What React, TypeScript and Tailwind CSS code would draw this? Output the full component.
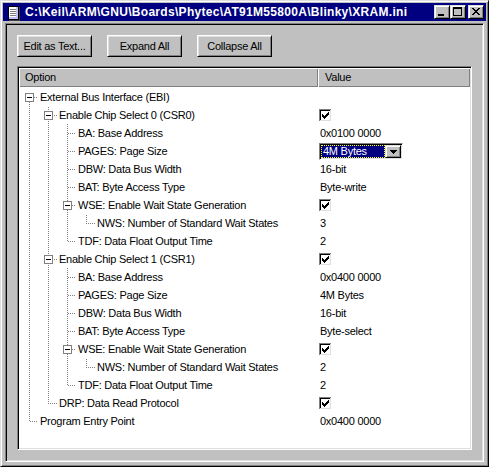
import React from "react";

type Row = {
  level: number;
  text: string;
  expander?: boolean;
  value?: string;
  check?: boolean;
  dropdown?: string;
};

const rows: Row[] = [
  { level: 0, text: "External Bus Interface (EBI)", expander: true },
  { level: 1, text: "Enable Chip Select 0 (CSR0)", expander: true, check: true },
  { level: 2, text: "BA: Base Address", value: "0x0100 0000" },
  { level: 2, text: "PAGES: Page Size", dropdown: "4M Bytes" },
  { level: 2, text: "DBW: Data Bus Width", value: "16-bit" },
  { level: 2, text: "BAT: Byte Access Type", value: "Byte-write" },
  { level: 2, text: "WSE: Enable Wait State Generation", expander: true, check: true },
  { level: 3, text: "NWS: Number of Standard Wait States", value: "3" },
  { level: 2, text: "TDF: Data Float Output Time", value: "2" },
  { level: 1, text: "Enable Chip Select 1 (CSR1)", expander: true, check: true },
  { level: 2, text: "BA: Base Address", value: "0x0400 0000" },
  { level: 2, text: "PAGES: Page Size", value: "4M Bytes" },
  { level: 2, text: "DBW: Data Bus Width", value: "16-bit" },
  { level: 2, text: "BAT: Byte Access Type", value: "Byte-select" },
  { level: 2, text: "WSE: Enable Wait State Generation", expander: true, check: true },
  { level: 3, text: "NWS: Number of Standard Wait States", value: "2" },
  { level: 2, text: "TDF: Data Float Output Time", value: "2" },
  { level: 1, text: "DRP: Data Read Protocol", check: true },
  { level: 0, text: "Program Entry Point", value: "0x0400 0000" },
];

const indentCls = ["pl-[21px]", "pl-[40px]", "pl-[59px]", "pl-[78px]"];

function hasNext(i: number): boolean {
  const L = rows[i].level;
  for (let j = i + 1; j < rows.length; j++) {
    if (rows[j].level < L) return false;
    if (rows[j].level === L) return true;
  }
  return false;
}
function hasPrev(i: number): boolean {
  const L = rows[i].level;
  for (let j = i - 1; j >= 0; j--) {
    if (rows[j].level < L) return false;
    if (rows[j].level === L) return true;
  }
  return false;
}
function ancestorCont(i: number, d: number): boolean {
  for (let j = i - 1; j >= 0; j--) {
    if (rows[j].level === d) return hasNext(j);
  }
  return false;
}

const cx = (L: number) => 10 + 19 * L;

function vDots(x: number, y0: number, y1: number, key: string) {
  const out: React.ReactElement[] = [];
  for (let y = y0; y < y1; y++) {
    if ((x + y) % 2 === 0) out.push(<rect key={key + "v" + y} x={x} y={y} width={1} height={1} fill="#808080" />);
  }
  return out;
}
function hDots(x0: number, x1: number, y: number, key: string) {
  const out: React.ReactElement[] = [];
  for (let x = x0; x < x1; x++) {
    if ((x + y) % 2 === 0) out.push(<rect key={key + "h" + x} x={x} y={y} width={1} height={1} fill="#808080" />);
  }
  return out;
}

function TreeLines({ i }: { i: number }) {
  const r = rows[i];
  const L = r.level;
  const els: React.ReactElement[] = [];
  for (let d = 0; d < L; d++) {
    if (ancestorCont(i, d)) els.push(...vDots(cx(d), 0, 18, "a" + d));
  }
  const c = cx(L);
  const top = L > 0 || hasPrev(i);
  const bottom = hasNext(i);
  if (top) els.push(...vDots(c, 0, 10, "t"));
  if (bottom) els.push(...vDots(c, 9, 18, "b"));
  els.push(...hDots(r.expander ? c + 5 : c, c + 9, 9, "h"));
  return (
    <svg className="absolute left-0 top-0" width={299} height={18} shapeRendering="crispEdges">
      {els}
      {r.expander && (
        <g>
          <rect x={c - 4 + 0.5} y={5.5} width={8} height={8} fill="#fff" stroke="#808080" strokeWidth={1} />
          <rect x={c - 2} y={9} width={5} height={1} fill="#000" />
        </g>
      )}
    </svg>
  );
}

function CheckBox() {
  const pix: [number, number][] = [];
  const cols: [number, number][] = [
    [3, 5], [4, 6], [5, 7], [6, 6], [7, 5], [8, 4], [9, 3],
  ];
  cols.forEach(([x, y]) => {
    for (let k = 0; k < 3; k++) pix.push([x, y + k]);
  });
  return (
    <svg width={13} height={13} shapeRendering="crispEdges" className="block">
      <rect x={0} y={0} width={13} height={13} fill="#fff" />
      <rect x={0} y={0} width={12} height={1} fill="#808080" />
      <rect x={0} y={0} width={1} height={12} fill="#808080" />
      <rect x={1} y={1} width={10} height={1} fill="#000" />
      <rect x={1} y={1} width={1} height={10} fill="#000" />
      <rect x={0} y={12} width={13} height={1} fill="#fff" />
      <rect x={12} y={0} width={1} height={13} fill="#fff" />
      <rect x={1} y={11} width={11} height={1} fill="#dfdfdf" />
      <rect x={11} y={1} width={1} height={11} fill="#dfdfdf" />
      {pix.map(([x, y]) => (
        <rect key={x + "-" + y} x={x} y={y} width={1} height={1} fill="#000" />
      ))}
    </svg>
  );
}

function Dropdown({ text }: { text: string }) {
  return (
    <div className="ml-[1px] mt-[1px] h-[17px] w-[84px] flex border border-t-[#808080] border-l-[#808080] border-b-white border-r-white shadow-[inset_1px_1px_0_#000,inset_-1px_-1px_0_#dfdfdf] p-[1px] bg-white">
      <div className="flex-1 bg-[#000080] border border-dotted border-[#ffff00] text-white flex items-center pl-[1px] leading-[11px]">
        {text}
      </div>
      <div className="w-[16px] h-full bg-[#c0c0c0] border border-t-[#dfdfdf] border-l-[#dfdfdf] border-b-black border-r-black shadow-[inset_1px_1px_0_#fff,inset_-1px_-1px_0_#808080] flex items-center justify-center">
        <svg width={7} height={4} shapeRendering="crispEdges">
          <rect x={0} y={0} width={7} height={1} fill="#000" />
          <rect x={1} y={1} width={5} height={1} fill="#000" />
          <rect x={2} y={2} width={3} height={1} fill="#000" />
          <rect x={3} y={3} width={1} height={1} fill="#000" />
        </svg>
      </div>
    </div>
  );
}

function PushButton({ label }: { label: string }) {
  return (
    <div className="w-[75px] h-[22px] bg-[#c0c0c0] border border-t-white border-l-white border-b-black border-r-black shadow-[inset_1px_1px_0_#dfdfdf,inset_-1px_-1px_0_#808080] flex items-center justify-center">
      {label}
    </div>
  );
}

function TitleButton({ children, className }: { children: React.ReactNode; className?: string }) {
  return (
    <div
      className={
        "w-[16px] h-[14px] bg-[#c0c0c0] border border-t-[#dfdfdf] border-l-[#dfdfdf] border-b-black border-r-black shadow-[inset_1px_1px_0_#fff,inset_-1px_-1px_0_#808080] relative " +
        (className ?? "")
      }
    >
      {children}
    </div>
  );
}

function PageIcon() {
  return (
    <svg width={14} height={16} viewBox="0 0 14 16" shapeRendering="crispEdges">
      <rect x={1} y={1} width={11} height={14} fill="#000" />
      <rect x={2} y={2} width={9} height={12} fill="#fff" />
      <rect x={9} y={2} width={2} height={12} fill="#c0c0ff" />
      <rect x={2} y={12} width={9} height={2} fill="#c0c0ff" />
      <rect x={3} y={4} width={6} height={1} fill="#808080" />
      <rect x={3} y={6} width={6} height={1} fill="#808080" />
      <rect x={3} y={8} width={6} height={1} fill="#808080" />
      <rect x={3} y={10} width={6} height={1} fill="#808080" />
      <rect x={12} y={2} width={1} height={14} fill="#404040" />
      <rect x={2} y={15} width={11} height={1} fill="#404040" />
    </svg>
  );
}

export default function App() {
  return (
    <div className="w-[489px] h-[467px] bg-[#c0c0c0] font-['Liberation_Sans',Arial,sans-serif] text-[11px] tracking-[-0.25px] text-black border border-t-[#dfdfdf] border-l-[#dfdfdf] border-b-black border-r-black shadow-[inset_1px_1px_0_#fff,inset_-1px_-1px_0_#808080] p-[2px] flex flex-col overflow-hidden">
      {/* title bar */}
      <div className="h-[18px] bg-[#000080] flex items-center shrink-0">
        <div className="ml-[4px] mt-[1px]">
          <PageIcon />
        </div>
        <div className="ml-[4px] text-white font-bold text-[12px] tracking-[0.3px] leading-[18px] whitespace-nowrap">
          C:\Keil\ARM\GNU\Boards\Phytec\AT91M55800A\Blinky\XRAM.ini
        </div>
        <div className="ml-auto mr-[2px] flex items-center">
          <TitleButton>
            <svg className="absolute left-[3px] top-[8px]" width={6} height={2}>
              <rect width={6} height={2} fill="#000" />
            </svg>
          </TitleButton>
          <TitleButton>
            <svg className="absolute left-[2px] top-[1px]" width={9} height={9} shapeRendering="crispEdges">
              <rect x={0} y={0} width={9} height={2} fill="#000" />
              <rect x={0} y={0} width={1} height={9} fill="#000" />
              <rect x={8} y={0} width={1} height={9} fill="#000" />
              <rect x={0} y={8} width={9} height={1} fill="#000" />
            </svg>
          </TitleButton>
          <TitleButton className="ml-[2px]">
            <svg className="absolute left-[3px] top-[2px]" width={8} height={7} shapeRendering="crispEdges">
              {[0, 1, 2, 3, 4, 5, 6].map((k) => (
                <g key={k}>
                  <rect x={k} y={k} width={2} height={1} fill="#000" />
                  <rect x={6 - k} y={k} width={2} height={1} fill="#000" />
                </g>
              ))}
            </svg>
          </TitleButton>
        </div>
      </div>

      {/* client */}
      <div className="mt-[2px] mx-[2px] h-[439px] border border-t-[#808080] border-l-[#808080] border-b-white border-r-white shadow-[inset_1px_1px_0_#000,inset_-1px_-1px_0_#dfdfdf] p-[11px] flex flex-col">
        <div className="flex gap-[15px] shrink-0">
          <PushButton label="Edit as Text..." />
          <PushButton label="Expand All" />
          <PushButton label="Collapse All" />
        </div>

        <div className="mt-[9px] flex-1 bg-white border border-t-[#808080] border-l-[#808080] border-b-white border-r-white shadow-[inset_1px_1px_0_#000,inset_-1px_-1px_0_#dfdfdf] p-[1px] flex flex-col">
          <div className="flex h-[19px] shrink-0 bg-[#c0c0c0]">
            <div className="w-[299px] h-full pl-[6px] flex items-center shadow-[inset_1px_1px_0_#fff,inset_-1px_-1px_0_#808080]">
              Option
            </div>
            <div className="flex-1 h-full pl-[7px] flex items-center shadow-[inset_1px_1px_0_#fff,inset_-1px_-1px_0_#808080]">
              Value
            </div>
          </div>
          <div className="pt-[1px] flex flex-col">
            {rows.map((r, i) => (
              <div key={i} className="flex h-[18px]">
                <div className={"relative w-[299px] h-full flex items-center whitespace-nowrap " + indentCls[r.level]}>
                  <TreeLines i={i} />
                  <span className="relative leading-[18px]">{r.text}</span>
                </div>
                <div className="flex-1 h-full flex items-center whitespace-nowrap">
                  {r.check && (
                    <div className="ml-[1px]">
                      <CheckBox />
                    </div>
                  )}
                  {r.value && <span className="pl-[2px] leading-[18px]">{r.value}</span>}
                  {r.dropdown && (
                    <div className="self-start">
                      <Dropdown text={r.dropdown} />
                    </div>
                  )}
                </div>
              </div>
            ))}
          </div>
        </div>
      </div>
    </div>
  );
}
